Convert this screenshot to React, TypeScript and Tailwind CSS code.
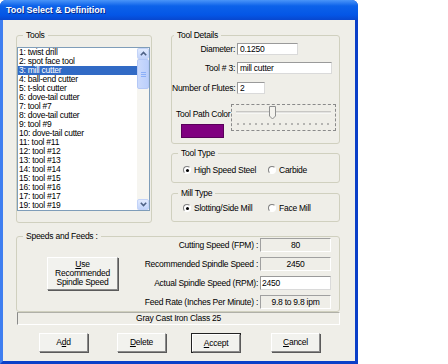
import React from 'react';

const tools = [
  '1: twist drill',
  '2: spot face tool',
  '3: mill cutter',
  '4: ball-end cutter',
  '5: t-slot cutter',
  '6: dove-tail cutter',
  '7: tool #7',
  '8: dove-tail cutter',
  '9: tool #9',
  '10: dove-tail cutter',
  '11: tool #11',
  '12: tool #12',
  '13: tool #13',
  '14: tool #14',
  '15: tool #15',
  '16: tool #16',
  '17: tool #17',
  '19: tool #19',
];

function Group({ label, legendClass = 'ml-[6px]', className = '', children }: { label: string; legendClass?: string; className?: string; children: React.ReactNode }) {
  return (
    <fieldset className={`border border-[#D0D0BF] rounded-[3px] min-w-0 ${className}`}>
      <legend className={`px-[3px] h-[10px] leading-[10px] ${legendClass}`}>{label}</legend>
      {children}
    </fieldset>
  );
}

function Radio({ checked, label, className = '' }: { checked?: boolean; label: string; className?: string }) {
  return (
    <div className={`flex items-center h-[10px] ${className}`}>
      <div className="w-[8px] h-[8px] rounded-full border border-t-[#808080] border-l-[#808080] border-r-white border-b-white bg-white flex items-center justify-center">
        {checked && <div className="w-[3px] h-[3px] rounded-full bg-black" />}
      </div>
      <span className="ml-[3px] leading-[10px]">{label}</span>
    </div>
  );
}

function Chevron({ up }: { up?: boolean }) {
  return (
    <svg width="7" height="5" viewBox="0 0 7 5">
      <path d={up ? 'M0.8 4.2 L3.5 1.5 L6.2 4.2' : 'M0.8 0.8 L3.5 3.5 L6.2 0.8'} fill="none" stroke="#4D6185" strokeWidth="1.6" />
    </svg>
  );
}

function ReadBox({ children }: { children: React.ReactNode }) {
  return (
    <div className="w-[71px] h-[14px] flex items-center justify-center border border-t-[#A0A0A0] border-l-[#A0A0A0] border-r-white border-b-white">
      {children}
    </div>
  );
}

function Btn({ children, className = '', def }: { children: React.ReactNode; className?: string; def?: boolean }) {
  const inner = (
    <div className="w-full h-full flex items-center justify-center bg-[#F2F2EE] border border-t-white border-l-white border-r-[#8A8A8A] border-b-[#8A8A8A] shadow-[1px_1px_0_#5A5A5A]">
      {children}
    </div>
  );
  if (def) {
    return <div className={`w-[50px] h-[20px] border border-[#222] ${className}`}>{inner}</div>;
  }
  return <div className={`w-[49px] h-[19px] ${className}`}>{inner}</div>;
}

export default function App() {
  return (
    <div className="w-[448px] h-[364px] bg-white text-[8.5px] tracking-[-0.25px] text-black font-['Liberation_Sans',Arial,sans-serif]">
      <div className="w-[358px] h-[364px] flex flex-col rounded-t-[6px] overflow-hidden bg-[#0A45D4]">
        {/* Title bar */}
        <div className="h-[20px] shrink-0 flex items-center pl-[6px] pt-[1px] bg-[linear-gradient(#4A95F8,#0C62EA_30%,#0456E6_75%,#0847CF)] text-white font-bold text-[9px] tracking-[-0.05px] [text-shadow:1px_1px_0_#0B2A8A]">
          Tool Select &amp; Definition
        </div>

        <div className="flex-1 flex border-l-[3px] border-r-[3px] border-b-[3px] border-l-[#3F7EF0] border-r-[#0A3FC8] border-b-[#0A3FC8]">
          <div className="flex-1 bg-[#EFEEE8] flex flex-col pl-[13px] pr-[15px] pt-[10px]">
            {/* Top section */}
            <div className="flex gap-[19px]">
              <Group label="Tools" className="w-[136px] h-[193px] pr-[1px]">
                <div className="mt-[7px] w-[133px] h-[164px] bg-white border border-[#7F9DB9] flex">
                  <div className="flex-1 flex flex-col">
                    {tools.map((t) => (
                      <div
                        key={t}
                        className={`h-[9px] leading-[9px] pl-[1px] whitespace-nowrap ${t === '3: mill cutter' ? 'bg-[#316AC5] text-white' : ''}`}
                      >
                        {t}
                      </div>
                    ))}
                  </div>
                  {/* Scrollbar */}
                  <div className="w-[12px] flex flex-col bg-[#F6F5F0]">
                    <div className="h-[11px] rounded-[2px] border border-[#C3D3F8] bg-[linear-gradient(#E2EBFE,#C2D4FB)] flex items-center justify-center">
                      <Chevron up />
                    </div>
                    <div className="h-[30px] rounded-[2px] border border-[#B4C8F6] bg-[linear-gradient(90deg,#CBDAFC,#BBCFFB)] flex flex-col items-center justify-center gap-[1px]">
                      <div className="w-[5px] h-px bg-[#8CB0F8]" />
                      <div className="w-[5px] h-px bg-[#8CB0F8]" />
                      <div className="w-[5px] h-px bg-[#8CB0F8]" />
                    </div>
                    <div className="flex-1" />
                    <div className="h-[11px] rounded-[2px] border border-[#C3D3F8] bg-[linear-gradient(#E2EBFE,#C2D4FB)] flex items-center justify-center">
                      <Chevron />
                    </div>
                  </div>
                </div>
              </Group>

              <div className="w-[169px] flex flex-col">
                <Group label="Tool Details" legendClass="ml-[2px]" className="h-[114px]">
                  <div className="flex items-center mt-[3px] h-[12px]">
                    <div className="w-[64px] text-right pr-[1px]">Diameter:</div>
                    <div className="ml-[1px] w-[61px] h-[12px] bg-white border border-[#9A9A9A] border-r-[#DADADA] border-b-[#DADADA] pl-[2px] leading-[10px]">0.1250</div>
                  </div>
                  <div className="flex items-center mt-[7px] h-[12px]">
                    <div className="w-[64px] text-right pr-[1px]">Tool # 3:</div>
                    <div className="ml-[1px] w-[95px] h-[12px] bg-white border border-[#9A9A9A] border-r-[#DADADA] border-b-[#DADADA] pl-[2px] leading-[10px]">mill cutter</div>
                  </div>
                  <div className="flex items-center mt-[8px] h-[12px]">
                    <div className="w-[64px] text-right pr-[1px] whitespace-nowrap">Number of Flutes:</div>
                    <div className="ml-[1px] w-[28px] h-[12px] bg-white border border-[#9A9A9A] border-r-[#DADADA] border-b-[#DADADA] pl-[2px] leading-[10px]">2</div>
                  </div>
                  <div className="flex mt-[10px]">
                    <div className="w-[59px] pl-[4px] flex flex-col">
                      <div className="mt-[5px] h-[10px] leading-[10px] whitespace-nowrap">Tool Path Color</div>
                      <div className="mt-[5px] ml-[5px] w-[43px] h-[14px] bg-[#800080] border border-[#5A005A]" />
                    </div>
                    <div className="w-[105px] h-[27px] border border-dashed border-[#8A8A8A]">
                      <svg width="103" height="25" viewBox="0 0 103 25">
                        <line x1="4" y1="7" x2="99" y2="7" stroke="#A0A0A0" strokeWidth="1" />
                        <line x1="4" y1="8" x2="99" y2="8" stroke="#FFFFFF" strokeWidth="1" />
                        <path d="M37.5 1.5 H43.5 V11 L40.5 14 L37.5 11 Z" fill="#F4F3EE" stroke="#8E8F8F" strokeWidth="1" />
                        {Array.from({ length: 16 }).map((_, i) => (
                          <line key={i} x1={6 + i * 6} y1="18" x2={6 + i * 6} y2="20" stroke="#7A7A7A" strokeWidth="1" />
                        ))}
                      </svg>
                    </div>
                  </div>
                </Group>

                <Group label="Tool Type" className="mt-[4px] h-[35px]">
                  <div className="flex mt-[7px] pl-[11px]">
                    <Radio checked label="High Speed Steel" className="w-[85px]" />
                    <Radio label="Carbide" />
                  </div>
                </Group>

                <Group label="Mill Type" className="mt-[5px] h-[34px]">
                  <div className="flex mt-[5px] pl-[11px]">
                    <Radio checked label="Slotting/Side Mill" className="w-[85px]" />
                    <Radio label="Face Mill" />
                  </div>
                </Group>
              </div>
            </div>

            {/* Speeds and Feeds */}
            <Group label="Speeds and Feeds :" className="mt-[8px] h-[81px]">
              <div className="flex items-center mt-[-3px] pr-[8px]">
                <div className="ml-[30px] w-[71px] h-[33px] bg-[#F2F2EE] border border-t-white border-l-white border-r-[#8A8A8A] border-b-[#8A8A8A] shadow-[1px_1px_0_#5A5A5A] flex flex-col items-center justify-center leading-[9px] text-center">
                  <span><span className="underline">U</span>se</span>
                  <span>Recommended</span>
                  <span>Spindle Speed</span>
                </div>
                <div className="flex-1 flex flex-col gap-[5px]">
                  <div className="flex items-center justify-end">
                    <span className="mr-[2px] whitespace-nowrap">Cutting Speed (FPM) :</span>
                    <ReadBox>80</ReadBox>
                  </div>
                  <div className="flex items-center justify-end">
                    <span className="mr-[2px] whitespace-nowrap">Recommended Spindle Speed :</span>
                    <ReadBox>2450</ReadBox>
                  </div>
                  <div className="flex items-center justify-end">
                    <span className="mr-[2px] whitespace-nowrap">Actual Spindle Speed (RPM):</span>
                    <div className="w-[71px] h-[14px] bg-white border border-[#9A9A9A] border-r-[#DADADA] border-b-[#DADADA] pl-[1px] leading-[12px]">2450</div>
                  </div>
                  <div className="flex items-center justify-end">
                    <span className="mr-[2px] whitespace-nowrap">Feed Rate (Inches Per Minute) :</span>
                    <ReadBox>9.8 to 9.8 ipm</ReadBox>
                  </div>
                </div>
              </div>
            </Group>

            {/* Status line */}
            <div className="ml-[1px] w-[323px] h-[13px] flex items-center justify-center border border-t-[#B0B0A8] border-l-[#8A8A8A] border-r-white border-b-white">
              Gray Cast Iron Class 25
            </div>

            {/* Buttons */}
            <div className="flex mt-[8px]">
              <Btn className="ml-[23px]">A<span className="underline">d</span>d</Btn>
              <Btn className="ml-[29px]"><span className="underline">D</span>elete</Btn>
              <Btn def className="ml-[25px]"><span className="underline">A</span>ccept</Btn>
              <Btn className="ml-[30px]"><span className="underline">C</span>ancel</Btn>
            </div>
          </div>
        </div>
      </div>
    </div>
  );
}
